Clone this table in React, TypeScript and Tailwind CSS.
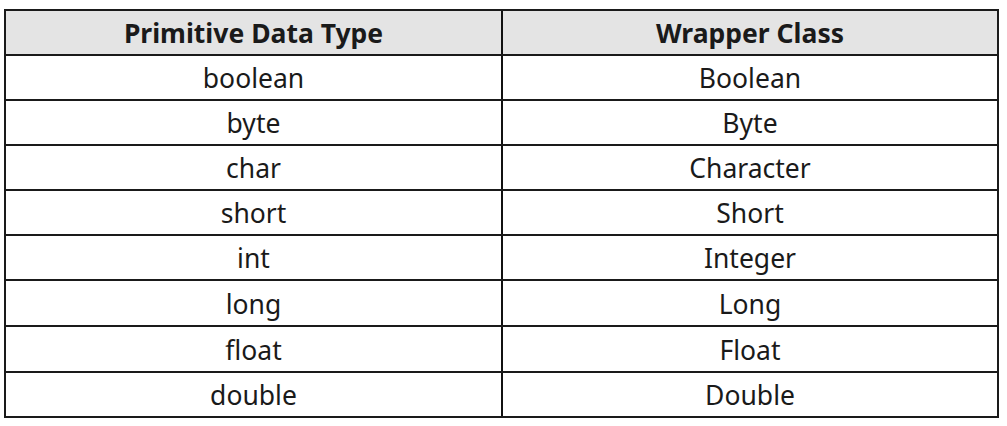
import React from "react";

const rows: [string, string, string][] = [
  ["boolean", "Boolean", "h-[45px]"],
  ["byte", "Byte", "h-[45px]"],
  ["char", "Character", "h-[45px]"],
  ["short", "Short", "h-[45px]"],
  ["int", "Integer", "h-[45px]"],
  ["long", "Long", "h-[46px]"],
  ["float", "Float", "h-[46px]"],
  ["double", "Double", "h-[45px]"],
];

export default function App() {
  return (
    <div
      className="w-[1007px] h-[426px] bg-white pl-[4px] pt-[9px] text-[#1a1a1a]"
      style={{ fontFamily: '"Noto Sans", "Open Sans", sans-serif' }}
    >
      <div className="w-[995px] border-2 border-[#1a1a1a]">
        <div className="grid grid-cols-[497px_1fr] h-[43px] bg-[#e4e4e4] text-[26.5px] font-bold">
          <div className="flex items-center justify-center border-r-2 border-[#111] pt-[3px]">Primitive Data Type</div>
          <div className="flex items-center justify-center pt-[3px]">Wrapper Class</div>
        </div>
        {rows.map(([p, w, h]) => (
          <div key={p} className={`grid grid-cols-[497px_1fr] border-t-2 border-[#1a1a1a] text-[26.5px] ${h}`}>
            <div className="flex items-center justify-center border-r-2 border-[#111] pt-[3px]">{p}</div>
            <div className="flex items-center justify-center pt-[3px]">{w}</div>
          </div>
        ))}
      </div>
    </div>
  );
}
